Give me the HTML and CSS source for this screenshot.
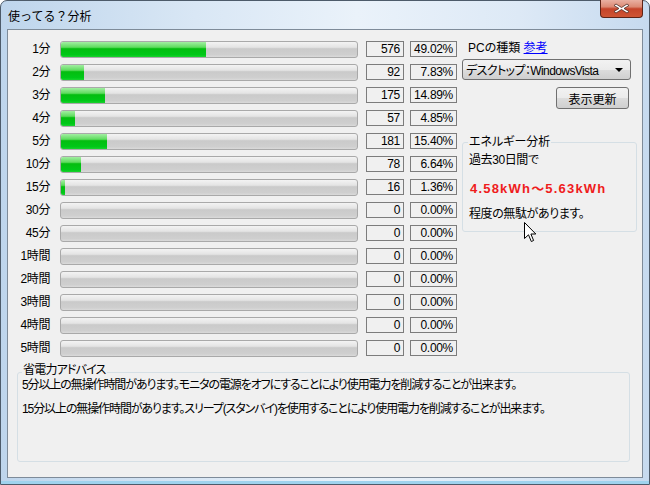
FILE: index.html
```html
<!DOCTYPE html>
<html lang="ja">
<head>
  <meta charset="UTF-8">
  <title>使ってる？分析</title>
  <link rel="stylesheet" href="styles.css">
</head>
<body>
  <div class="window">
    <div class="titlebar">
      <span class="title">使ってる？分析</span>
      <div class="close">
        <svg width="17" height="11" viewBox="0 0 17 11">
          <path d="M3 1 L8.5 4.5 L14 1 L16 2.5 L11 5.5 L16 8.5 L14 10 L8.5 6.5 L3 10 L1 8.5 L6 5.5 L1 2.5 Z" fill="#fff" stroke="#4a2a22" stroke-width="0.8"/>
        </svg>
      </div>
    </div>
    <div class="client">
      <div class="main">
        <div class="stats">
          <div class="row"><span class="label">1分</span><div class="bar"><div class="fill" style="width: 49.02%"></div></div><span class="box count">576</span><span class="box pct">49.02%</span></div>
          <div class="row"><span class="label">2分</span><div class="bar"><div class="fill" style="width: 7.83%"></div></div><span class="box count">92</span><span class="box pct">7.83%</span></div>
          <div class="row"><span class="label">3分</span><div class="bar"><div class="fill" style="width: 14.89%"></div></div><span class="box count">175</span><span class="box pct">14.89%</span></div>
          <div class="row"><span class="label">4分</span><div class="bar"><div class="fill" style="width: 4.85%"></div></div><span class="box count">57</span><span class="box pct">4.85%</span></div>
          <div class="row"><span class="label">5分</span><div class="bar"><div class="fill" style="width: 15.40%"></div></div><span class="box count">181</span><span class="box pct">15.40%</span></div>
          <div class="row"><span class="label">10分</span><div class="bar"><div class="fill" style="width: 6.64%"></div></div><span class="box count">78</span><span class="box pct">6.64%</span></div>
          <div class="row"><span class="label">15分</span><div class="bar"><div class="fill" style="width: 1.36%"></div></div><span class="box count">16</span><span class="box pct">1.36%</span></div>
          <div class="row"><span class="label">30分</span><div class="bar"></div><span class="box count">0</span><span class="box pct">0.00%</span></div>
          <div class="row"><span class="label">45分</span><div class="bar"></div><span class="box count">0</span><span class="box pct">0.00%</span></div>
          <div class="row"><span class="label">1時間</span><div class="bar"></div><span class="box count">0</span><span class="box pct">0.00%</span></div>
          <div class="row"><span class="label">2時間</span><div class="bar"></div><span class="box count">0</span><span class="box pct">0.00%</span></div>
          <div class="row"><span class="label">3時間</span><div class="bar"></div><span class="box count">0</span><span class="box pct">0.00%</span></div>
          <div class="row"><span class="label">4時間</span><div class="bar"></div><span class="box count">0</span><span class="box pct">0.00%</span></div>
          <div class="row"><span class="label">5時間</span><div class="bar"></div><span class="box count">0</span><span class="box pct">0.00%</span></div>
        </div>
        <div class="side">
          <div class="pc-type">PCの種類 <a href="#" class="link">参考</a></div>
          <div class="combo">
            <span>デスクトップ：WindowsVista</span>
            <svg width="8" height="4" viewBox="0 0 8 4"><path d="M0 0 H8 L4 4 Z" fill="#000"/></svg>
          </div>
          <div class="btn">表示更新</div>
          <div class="group energy">
            <div class="group-title">エネルギー分析</div>
            <div class="energy-text">過去30日間で</div>
            <div class="energy-value">4.58kWh～5.63kWh</div>
            <div class="energy-text last">程度の無駄があります。</div>
          </div>
        </div>
      </div>
      <div class="group advice">
        <div class="group-title">省電力アドバイス</div>
        <p class="advice-line">5分以上の無操作時間があります。モニタの電源をオフにすることにより使用電力を削減することが出来ます。</p>
        <p class="advice-line second">15分以上の無操作時間があります。スリープ(スタンバイ)を使用することにより使用電力を削減することが出来ます。</p>
      </div>
    </div>
  </div>
  <svg class="cursor" width="13" height="21" viewBox="0 0 13 21">
    <path d="M0.5 0.5 L0.5 16.5 L4.5 12.8 L7.3 19.5 L9.6 18.5 L6.9 12 L11.8 12 Z" fill="#fff" stroke="#000" stroke-width="1"/>
  </svg>
</body>
</html>
```

FILE: styles.css
```css
body {
  margin: 0;
  font-family: "Liberation Sans", "Noto Sans CJK JP", sans-serif;
  font-size: 12px;
  font-feature-settings: "palt";
  color: #000;
  background: #fff;
}

.window {
  position: relative;
  width: 650px;
  height: 485px;
  box-sizing: border-box;
  border: 1px solid #4d5b6a;
  border-radius: 7px 7px 0 0;
  padding: 0 6px 6px 6px;
  display: flex;
  flex-direction: column;
  background: linear-gradient(to right, #bed5ec 0%, #d9e7f5 30%, #eaf2fa 55%, #dde9f6 80%, #c6daef 100%);
  box-shadow: inset 0 -3px 0 #9fd3ee;
}

.titlebar {
  height: 28px;
  display: flex;
  align-items: center;
  padding-left: 1px;
}

.title {
  font-size: 12px;
  font-feature-settings: normal;
  color: #000;
}

.close {
  margin-left: auto;
  align-self: flex-start;
  margin-top: -1px;
  width: 43px;
  height: 18px;
  box-sizing: border-box;
  border: 1px solid #5e2316;
  border-top: none;
  border-radius: 0 0 4px 4px;
  background: linear-gradient(#e9b0a2 0%, #dc8a74 40%, #c5442a 52%, #cf5534 100%);
  display: flex;
  align-items: center;
  justify-content: center;
}

.client {
  flex: 1;
  border: 1px solid #7e8b99;
  background: #f0f0f0;
  display: flex;
  flex-direction: column;
}

.main {
  display: flex;
  padding-top: 11px;
}

.stats {
  width: 449px;
}

.row {
  display: flex;
  align-items: flex-start;
  height: 17px;
  margin-bottom: 6px;
}

.row:last-child {
  margin-bottom: 0;
}

.label {
  width: 38px;
  margin-left: 4px;
  margin-right: 10px;
  text-align: right;
  line-height: 16px;
  letter-spacing: -0.4px;
}

.bar {
  width: 298px;
  height: 17px;
  box-sizing: border-box;
  border: 1px solid #a9a9a9;
  border-radius: 3px;
  overflow: hidden;
  background: linear-gradient(#f3f3f3 0%, #e4e4e4 35%, #cacaca 45%, #cfcfcf 85%, #dadada 100%);
}

.fill {
  height: 100%;
  background: linear-gradient(#a2eea2 0%, #5fdc5f 35%, #04bd10 45%, #00c818 85%, #1ad22e 100%);
}

.box {
  height: 16px;
  box-sizing: border-box;
  border: 1px solid #7c7c7c;
  text-align: right;
  padding-right: 3px;
  line-height: 14px;
  letter-spacing: -0.3px;
}

.count {
  width: 38px;
  margin-left: 8px;
}

.pct {
  width: 47px;
  margin-left: 6px;
}

.side {
  width: 179px;
  margin-left: 5px;
  display: flex;
  flex-direction: column;
}

.pc-type {
  line-height: 14px;
  padding-left: 6px;
}

.link {
  color: #0000ff;
  text-decoration: underline;
}

.combo {
  margin-top: 4px;
  width: 169px;
  height: 21px;
  box-sizing: border-box;
  border: 1px solid #707070;
  border-radius: 3px;
  background: linear-gradient(#f2f2f2 0%, #ebebeb 50%, #dddddd 51%, #cfcfcf 100%);
  display: flex;
  align-items: center;
  justify-content: space-between;
  padding: 0 7px 0 3px;
  letter-spacing: -0.6px;
}

.btn {
  margin-top: 7px;
  align-self: flex-end;
  margin-right: 12px;
  width: 73px;
  height: 22px;
  box-sizing: border-box;
  border: 1px solid #707070;
  border-radius: 3px;
  background: linear-gradient(#f2f2f2 0%, #ebebeb 50%, #dddddd 51%, #cfcfcf 100%);
  display: flex;
  align-items: center;
  justify-content: center;
}

.group {
  border: 1px solid #d5dfe5;
  border-radius: 3px;
  box-sizing: border-box;
}

.group-title {
  width: fit-content;
  margin-top: -8px;
  margin-left: 5px;
  padding: 0 1px;
  line-height: 14px;
  background: #f0f0f0;
}

.energy {
  margin-top: 33px;
  margin-right: 4px;
  height: 90px;
}

.energy-text {
  margin-top: 4px;
  padding-left: 6px;
  line-height: 14px;
  letter-spacing: -0.4px;
}

.energy-text.last {
  margin-top: 10px;
}

.energy-value {
  margin-top: 14px;
  padding-left: 7px;
  line-height: 16px;
  color: #ef1c1c;
  font-weight: bold;
  font-size: 13px;
  letter-spacing: 1.2px;
}

.advice {
  margin: 15px 12px 0 9px;
  height: 90px;
}

.advice .group-title {
  margin-top: -10px;
  margin-left: 4px;
  letter-spacing: -0.8px;
}

.advice-line {
  margin: 1px 0 0 4px;
  line-height: 14px;
  letter-spacing: -1.1px;
}

.advice-line.second {
  margin-top: 10px;
}

.cursor {
  position: absolute;
  left: 524px;
  top: 222px;
}
```
